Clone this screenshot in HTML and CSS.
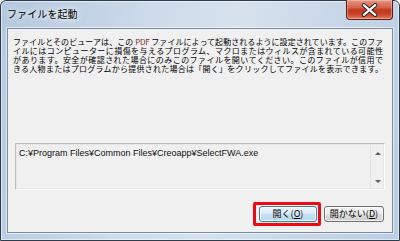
FILE: index.html
```html
<!DOCTYPE html>
<html lang="ja">
<head>
  <meta charset="UTF-8">
  <title>ファイルを起動</title>
  <link rel="stylesheet" href="styles.css">
</head>
<body>

  <div class="window">
    <div class="titlebar">
      <span class="title">ファイルを起動</span>
      <button class="close" aria-label="閉じる">
        <svg width="47" height="20" viewBox="0 0 47 20" xmlns="http://www.w3.org/2000/svg">
          <path d="M17.5 5 L29.5 15 M29.5 5 L17.5 15" stroke="#2d2320" stroke-width="4.4" stroke-linecap="round"/>
          <path d="M17.5 5 L29.5 15 M29.5 5 L17.5 15" stroke="#ffffff" stroke-width="2.3" stroke-linecap="round"/>
        </svg>
      </button>
    </div>

    <div class="client">
      <div class="message">
        <div class="line line-tight">ファイルとそのビューアは、この <span class="pdf">PDF</span> ファイルによって起動されるように設定されています。このファ</div>
        <div class="line">イルにはコンピューターに損傷を与えるプログラム、マクロまたはウィルスが含まれている可能性</div>
        <div class="line">があります。安全が確認された場合にのみこのファイルを開いてください。このファイルが信用で</div>
        <div class="line">きる人物またはプログラムから提供された場合は「開く」をクリックしてファイルを表示できます。</div>
      </div>

      <div class="path-box">
        <div class="path-text">C:¥Program Files¥Common Files¥Creoapp¥SelectFWA.exe</div>
        <div class="scroll">
          <span class="arrow arrow-up"></span>
          <span class="arrow arrow-down"></span>
        </div>
      </div>

      <div class="buttons">
        <span class="highlight">
          <button class="btn btn-default">開く(<u>O</u>)</button>
        </span>
        <button class="btn btn-wide">開かない(<u>D</u>)</button>
      </div>
    </div>
  </div>

</body>
</html>
```

FILE: styles.css
```css
body {
  margin: 0;
  width: 400px;
  height: 241px;
  overflow: hidden;
  font-family: "Noto Sans CJK JP", "Noto Sans", sans-serif;
  color: #000;
}

.window {
  width: 400px;
  height: 241px;
  box-sizing: border-box;
  border: 1px solid #2e3b4b;
  border-radius: 6px 6px 0 0;
  background: linear-gradient(100deg, #b3c8df 0%, #cddbea 35%, #d6e1ed 55%, #c6d6e7 80%, #b9cde3 100%);
  box-shadow: inset 0 0 0 1px rgba(255, 255, 255, 0.55);
  padding: 0 6px 7px;
  display: flex;
  flex-direction: column;
}

.titlebar {
  height: 27px;
  display: flex;
  justify-content: space-between;
  align-items: flex-start;
}

.title {
  font-size: 10px;
  line-height: 12px;
  padding-top: 7px;
  letter-spacing: 0.1px;
  text-shadow: 0 0 5px #fff, 0 0 9px rgba(255, 255, 255, 0.9);
}

.close {
  width: 47px;
  height: 20px;
  margin-top: -1px;
  padding: 0;
  border: 1px solid #5e1a12;
  border-top: none;
  border-radius: 0 0 4px 4px;
  background: linear-gradient(#e39a8a 0%, #d4624c 40%, #c2381e 52%, #c84328 75%, #df7f62 100%);
  box-shadow: inset 0 0 0 1px rgba(255, 210, 200, 0.45);
  display: flex;
  align-items: center;
  justify-content: center;
  overflow: hidden;
}

.close svg {
  display: block;
}

.client {
  flex: 1;
  display: flex;
  flex-direction: column;
  background: #f0f0f0;
  border: 1px solid #7b8b9e;
  box-shadow: 0 0 0 1px rgba(255, 255, 255, 0.6);
}

.message {
  flex: 1;
  padding: 8px 9px 0 5px;
  font-size: 8px;
  line-height: 9px;
}

.line {
  white-space: nowrap;
  text-align: justify;
  text-align-last: justify;
}

.line-tight {
  letter-spacing: -0.25px;
}

.pdf {
  color: #7a2e1e;
}

.path-box {
  margin: 0 7px;
  height: 45px;
  display: flex;
  border: 1px solid;
  border-color: #bdbdbd #ffffff #ffffff #bdbdbd;
  box-shadow: inset 0 0 0 1px #e6e6e6;
}

.path-text {
  flex: 1;
  padding: 4px 3px 0;
  font-family: "Liberation Sans", Arial, sans-serif;
  font-size: 9px;
  line-height: 11px;
  color: #111;
}

.scroll {
  width: 13px;
  border-left: 1px solid #e3e3e3;
  display: flex;
  flex-direction: column;
  justify-content: space-between;
  align-items: center;
  padding: 8px 0 6px;
}

.arrow {
  width: 0;
  height: 0;
  border-left: 3px solid transparent;
  border-right: 3px solid transparent;
}

.arrow-up {
  border-bottom: 3px solid #5a5a5a;
}

.arrow-down {
  border-top: 3px solid #5a5a5a;
}

.buttons {
  display: flex;
  justify-content: flex-end;
  align-items: center;
  gap: 3px;
  margin: 12px 0 6px;
  padding-right: 8px;
}

.highlight {
  display: flex;
  border: 3px solid #ee0a14;
  border-radius: 2px;
  padding: 1px 1px 1px 3px;
}

.btn {
  width: 58px;
  height: 16px;
  padding: 0;
  font-family: "Noto Sans CJK JP", sans-serif;
  font-size: 9px;
  line-height: 14px;
  color: #000;
  border: 1px solid #707070;
  border-radius: 3px;
  background: linear-gradient(#f4f4f4 0%, #ebebeb 48%, #dddddd 52%, #cfcfcf 100%);
  box-shadow: inset 0 0 0 1px rgba(255, 255, 255, 0.7);
  white-space: nowrap;
}

.btn u {
  text-underline-offset: 1px;
}

.btn-default {
  border-color: #3c7fb1;
  background: linear-gradient(#eaf5fc 0%, #dcecf8 48%, #c4e0f3 52%, #b8d7ee 100%);
  box-shadow: inset 0 0 0 1px rgba(255, 255, 255, 0.8);
}

.btn-wide {
  width: 60px;
}
```
